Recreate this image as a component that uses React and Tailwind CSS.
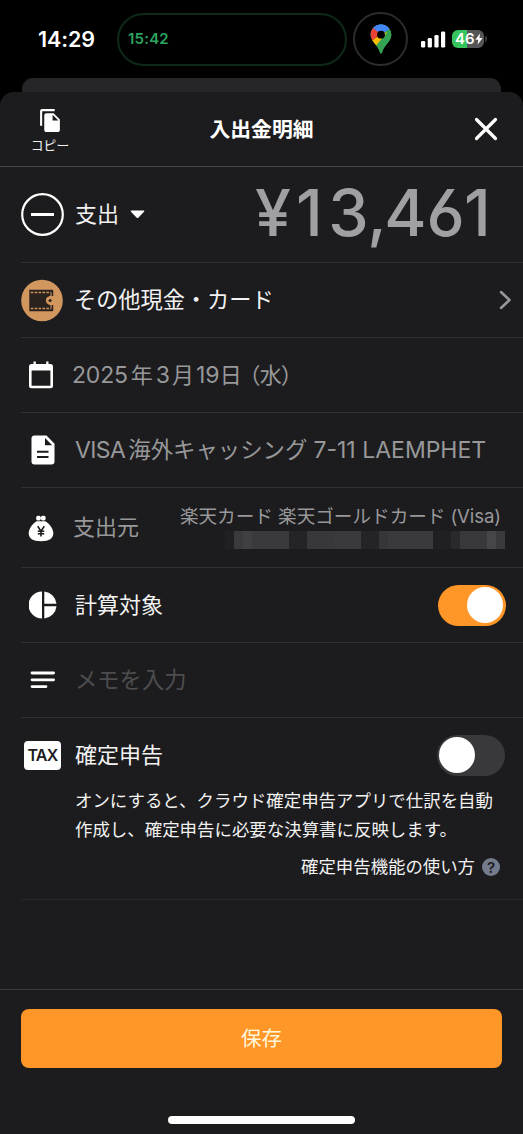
import React, { useState } from "react";
import { MdFileCopy } from "react-icons/md";

const mosaic = [
  { w: "w-[9px]", color: "bg-[#202022]" },
  { w: "w-[9px]", color: "bg-[#3a3a3c]" },
  { w: "w-[9px]", color: "bg-[#404042]" },
  { w: "w-[37px]", color: "bg-[#3a3a3c]" },
  { w: "w-[18px]", color: "bg-[#242426]" },
  { w: "w-[27px]", color: "bg-[#38383a]" },
  { w: "w-[27px]", color: "bg-[#3a3a3c]" },
  { w: "w-[18px]", color: "bg-[#242426]" },
  { w: "w-[9px]", color: "bg-[#363638]" },
  { w: "w-[45px]", color: "bg-[#3a3a3c]" },
  { w: "w-[18px]", color: "bg-[#202022]" },
  { w: "w-[9px]", color: "bg-[#29292b]" },
  { w: "w-[27px]", color: "bg-[#39393b]" },
  { w: "w-[9px]", color: "bg-[#464648]" },
  { w: "w-[9px]", color: "bg-[#3a3a3c]" },
];

const amount = [
  { char: "¥", w: "w-[25px]" },
  { char: "1", w: "ml-[5px] w-[38px]" },
  { char: "3", w: "w-[40px]" },
  { char: ",", w: "w-[17px]" },
  { char: "4", w: "w-[40px]" },
  { char: "6", w: "w-[40px]" },
  { char: "1", w: "w-[24px]" },
];

function StatusBar() {
  return (
    <div className="flex h-[78px] items-center">
      <div className="ml-[38px] w-[79px] text-[21.5px] leading-[30px] font-semibold tracking-[-0.1px] text-white">
        14:29
      </div>
      <div className="flex h-[53px] w-[230px] items-center rounded-full border-2 border-[#0d2a18] pl-[9px] text-[15px] font-semibold tracking-[0.2px] text-[#2ba45f]">
        15:42
      </div>
      <div className="ml-[6px] flex h-[54px] w-[55px] items-center justify-center rounded-full border-2 border-[#2c2c2e]">
        <MapPin />
      </div>
      <svg className="ml-[13px]" width="25" height="17" viewBox="0 0 25 17" fill="#fff">
        <rect x="0" y="10" width="4.2" height="6.5" rx="1.3" />
        <rect x="6.7" y="7" width="4.2" height="9.5" rx="1.3" />
        <rect x="13.4" y="4" width="4.2" height="12.5" rx="1.3" />
        <rect x="20" y="0.5" width="4.2" height="16" rx="1.3" />
      </svg>
      <div className="ml-[6px] flex h-[18px] w-[32px] items-center overflow-hidden rounded-[6px] bg-linear-to-r from-[#36c45c] from-47% to-[#555558] to-47% pl-[3px]">
        <span className="text-[15px] leading-[18px] font-semibold text-white">46</span>
        <svg width="8" height="12" viewBox="0 0 8 12" fill="#fff">
          <path d="M5 0.5 0.3 6.8h3L2.6 11.5 7.6 5H4.5z" />
        </svg>
      </div>
      <div className="ml-[1px] h-[6px] w-[2px] rounded-r-full bg-[#38383a]" />
    </div>
  );
}

function MapPin() {
  return (
    <svg width="22" height="30" viewBox="0 0 22 30">
      <defs>
        <clipPath id="pin">
          <path d="M11 .5C5.200.5.700 5 .7 10.700c0 3.600 1.700 5.800 4 8.800 2.500 3.200 4.300 5.200 5.300 8.900.4 1.300 1.600 1.300 2 0 1-3.700 2.800-5.700 5.300-8.900 2.300-3 4-5.200 4-8.800C21.300 5 16.800.5 11 .5z" />
        </clipPath>
      </defs>
      <g clipPath="url(#pin)">
        <rect width="22" height="30" fill="#34a353" />
        <path d="M0 14 11 11 22 3V0H0z" fill="#4285f4" />
        <path d="M11 10.500 2 2.800-2 8v8l4 1z" fill="#ea4335" />
        <path d="M11 10.500 0 18v4h6L17.500 8z" fill="#fbbc04" />
        <path d="M22 3.500 3 25l6 5h13z" fill="#34a353" />
        <path d="M11 10.500 3 3.300 8-2h8l3.500 4z" fill="#4285f4" />
      </g>
      <circle cx="11" cy="10.700" r="3.900" fill="#000" />
    </svg>
  );
}

function WalletIcon() {
  return (
    <svg className="mr-[1px]" width="43" height="43" viewBox="0 0 43 43">
      <circle cx="21.500" cy="21.500" r="21.300" fill="#d2965f" />
      <path d="M8.500 10.500h23.500q1 0 1 1V17h-3.500q-4 1-4 4.500t4 4.500H33v5.500q0 1-1 1H8.500z" fill="#2a221d" />
      <path d="M10 13.300h21M10 29.700h21" fill="none" stroke="#d2965f" strokeWidth="1.400" strokeDasharray="2.600 1.400" />
      <path d="M30.800 14v3.500M30.800 29v-3.500" fill="none" stroke="#d2965f" strokeWidth="1.200" />
      <path d="M33.500 17.600h-4q-3 1-3 3.900t3 3.900h4z" fill="#d2965f" />
      <circle cx="29.800" cy="21.500" r="1.600" fill="#2a221d" />
    </svg>
  );
}

function CalendarIcon() {
  return (
    <svg className="mr-[3px]" width="26" height="28" viewBox="0 0 26 28" fill="#fff">
      <path
        fillRule="evenodd"
        d="M5.500.500h2.300v2.500h10.400V.500h2.300V3H22.500Q25 3 25 5.500v19.300q0 2.500-2.500 2.500h-19Q1 27.300 1 24.800V5.500Q1 3 3.500 3h2zM3.600 9.500v15.200h18.800V9.500z"
      />
    </svg>
  );
}

function DocIcon() {
  return (
    <svg className="ml-[1px]" width="24" height="30" viewBox="0 0 24 30">
      <path d="M3.500.500h12L23.500 8.800v17.700q0 3-3 3h-17q-3 0-3-3v-23q0-3 3-3z" fill="#fff" />
      <path d="M14 3v7.300h7.200z" fill="#1c1c1e" />
      <path d="M6 16.700h11.500M6 22h11.500" stroke="#1c1c1e" strokeWidth="2" />
    </svg>
  );
}

function MoneyBagIcon() {
  return (
    <svg className="mr-[3px] mb-[-2px]" width="26" height="27" viewBox="0 0 26 27">
      <rect x="8.200" y="0.800" width="4.600" height="4.600" rx="1.600" fill="#fff" />
      <rect x="13" y="0.800" width="4.600" height="4.600" rx="1.600" fill="#fff" />
      <path d="M8.500 6.300h9C22 9.500 25.300 14 25.300 18.300c0 5-4 8-12.300 8S.7 23.300.7 18.300C.7 14 4 9.500 8.500 6.300z" fill="#fff" />
      <path d="m9.700 11.300 3.300 4.800 3.300-4.800M13 16v5.500M9.800 16.300h6.400M9.800 18.800h6.400" fill="none" stroke="#1c1c1e" strokeWidth="1.600" />
    </svg>
  );
}

function PieIcon() {
  return (
    <svg width="28" height="28" viewBox="0 0 28 28" fill="#fff">
      <path d="M13 .5v27A13.500 13.500 0 0 1 13 .5zM15.300.5A13.500 13.500 0 0 1 27.500 12.800H15.300zM15.300 15.200h12.200A13.500 13.500 0 0 1 15.300 27.500z" />
    </svg>
  );
}

function MemoIcon() {
  return (
    <svg width="26" height="18" viewBox="0 0 26 18" stroke="#fff" strokeWidth="2.800" strokeLinecap="round">
      <path d="M2 2h21.600M2 8.800h21.600M2 15.600h14" />
    </svg>
  );
}

function Toggle({ on, onChange }) {
  return (
    <button
      role="switch"
      aria-checked={on}
      onClick={() => onChange(!on)}
      className={`flex h-[41px] w-[68px] items-center rounded-full pr-[3px] pl-[2px] ${on ? "justify-end bg-[#ff9728]" : "justify-start bg-[#39393b]"}`}
    >
      <span className="h-[36px] w-[36px] rounded-full bg-white" />
    </button>
  );
}

function Row({ icon, height = "h-[75px]", children }) {
  return (
    <div className={`ml-[21px] flex items-center border-b border-[#303032] ${height}`}>
      <div className="flex w-[43px] shrink-0 justify-center">{icon}</div>
      {children}
    </div>
  );
}

export default function App() {
  const [target, setTarget] = useState(true);
  const [tax, setTax] = useState(false);

  return (
    <div className="flex h-[1134px] w-[523px] flex-col overflow-hidden bg-black font-['Inter','Noto_Sans_CJK_JP',sans-serif] whitespace-nowrap text-[#f2f2f2]">
      <StatusBar />
      <div className="mx-[22px] h-[14px] rounded-t-[11px] bg-[#262629]" />

      <div className="flex flex-1 flex-col rounded-t-[14px] bg-[#1c1c1e]">
        <div className="grid h-[75px] grid-cols-[1fr_auto_1fr] items-center border-b border-[#48484a]">
          <div className="flex w-[100px] flex-col items-center pt-[5px]">
            <MdFileCopy size={25} color="#fff" />
            <span className="mt-[4px] text-[12.800px] leading-[18px]">コピー</span>
          </div>
          <h1 className="pt-[2px] text-[20.800px] font-bold text-white">入出金明細</h1>
          <button className="mr-[25px] justify-self-end" aria-label="閉じる">
            <svg width="24" height="24" viewBox="0 0 24 24" stroke="#fff" strokeWidth="3.200" strokeLinecap="round">
              <path d="m2.500 2.500 19 19m0-19-19 19" />
            </svg>
          </button>
        </div>

        <Row
          height="h-[96px]"
          icon={
            <svg width="43" height="43" viewBox="0 0 43 43" fill="none" stroke="#fff">
              <circle cx="21.500" cy="21.500" r="20.300" strokeWidth="2.200" />
              <path d="M10 21.500h23" strokeWidth="3" />
            </svg>
          }
        >
          <span className="ml-[11px] text-[22px]">支出</span>
          <svg className="ml-[11px]" width="15" height="9" viewBox="0 0 15 9" fill="#fff">
            <path d="M1.500.5h12q1.500 0 .5 1.200L8.500 7.500q-1 1-2 0L1 1.700Q0 .5 1.500.5z" />
          </svg>
          <div className="mr-[35px] ml-auto flex pb-[3px] text-[64.500px] leading-none font-[450] tracking-[-3px] text-[#a0a0a2] [font-feature-settings:'cv03']">
            {amount.map((a, i) => (
              <span key={i} className={`flex justify-center ${a.w}`}>
                {a.char}
              </span>
            ))}
          </div>
        </Row>

        <Row icon={<WalletIcon />}>
          <span className="ml-[10px] text-[22.200px]">その他現金・カード</span>
          <svg className="mr-[11px] ml-auto" width="13" height="20" viewBox="0 0 13 20" fill="none" stroke="#98989c" strokeWidth="2.500" strokeLinecap="round" strokeLinejoin="round">
            <path d="m2 2 8.500 8L2 18" />
          </svg>
        </Row>

        <Row icon={<CalendarIcon />}>
          <div className="ml-[8px] flex items-baseline text-[22px] text-[#98989a]">
            <span className="text-[23px] tracking-[-0.2px]">2025</span>
            <span className="mx-[3px]">年</span>
            <span className="mr-[2px] text-[23px]">3</span>
            <span className="mr-[2px]">月</span>
            <span className="text-[23px]">19</span>
            <span>日</span>
            <span className="ml-[7px] [font-feature-settings:'palt']">（水）</span>
          </div>
        </Row>

        <Row icon={<DocIcon />}>
          <div className="ml-[11px] flex items-baseline text-[22.400px] text-[#98989a]">
            <span className="mr-[3px] text-[23px] tracking-[-0.6px]">VISA</span>
            <span>海外キャッシング</span>
            <span className="ml-[6px] text-[23px]">7-11 LAEMPHET</span>
          </div>
        </Row>

        <Row height="h-[80px]" icon={<MoneyBagIcon />}>
          <span className="ml-[9px] text-[22px] text-[#98989a]">支出元</span>
          <div className="mr-[18px] ml-auto flex flex-col items-end pb-[4px]">
            <span className="mr-[4px] mb-[1px] text-[18.600px] leading-[27px] text-[#98989a]">
              楽天カード 楽天ゴールドカード<span className="ml-[5px] tracking-[-0.1px]">(Visa)</span>
            </span>
            <div className="flex h-[18px]">
              {mosaic.map((m, i) => (
                <span key={i} className={`h-full ${m.w} ${m.color}`} />
              ))}
            </div>
          </div>
        </Row>

        <Row icon={<PieIcon />}>
          <span className="mr-auto ml-[11px] text-[22px]">計算対象</span>
          <div className="mr-[17px]">
            <Toggle on={target} onChange={setTarget} />
          </div>
        </Row>

        <Row icon={<MemoIcon />}>
          <span className="ml-[11px] text-[22.300px] text-[#4d4d4f]">メモを入力</span>
        </Row>

        <div className="ml-[21px] h-[182px] border-b border-[#29292b]">
          <div className="flex h-[74px] items-center">
            <div className="ml-[3px] flex h-[29px] w-[37px] items-center justify-center rounded-[4px] bg-white text-[16px] font-semibold tracking-[-0.7px] text-[#1c1c1e]">
              TAX
            </div>
            <span className="mr-auto ml-[14px] text-[22px]">確定申告</span>
            <div className="mr-[18px]">
              <Toggle on={tax} onChange={setTax} />
            </div>
          </div>
          <p className="mt-[-5px] ml-[54px] text-[17.450px] leading-[28.500px]">
            オンにすると、クラウド確定申告アプリで仕訳を自動
            <br />
            作成し、確定申告に必要な決算書に反映します。
          </p>
          <div className="mt-[10px] mr-[23px] flex items-center justify-end gap-[7px] text-[17.400px] leading-[26px]">
            確定申告機能の使い方
            <span className="flex h-[18px] w-[18px] items-center justify-center rounded-full bg-[#747b8d] text-[15px] leading-none font-semibold text-[#1c1c1e]">
              ?
            </span>
          </div>
        </div>

        <div className="mt-auto flex h-[145px] flex-col items-center border-t border-[#3a3a3c] pt-[19px]">
          <button className="h-[59px] w-[481px] rounded-[8px] bg-[#ff9728] pt-[2px] text-[20.500px] text-[#fff6dc]">
            保存
          </button>
          <div className="mt-[48px] h-[8px] w-[187px] rounded-full bg-white" />
        </div>
      </div>
    </div>
  );
}
